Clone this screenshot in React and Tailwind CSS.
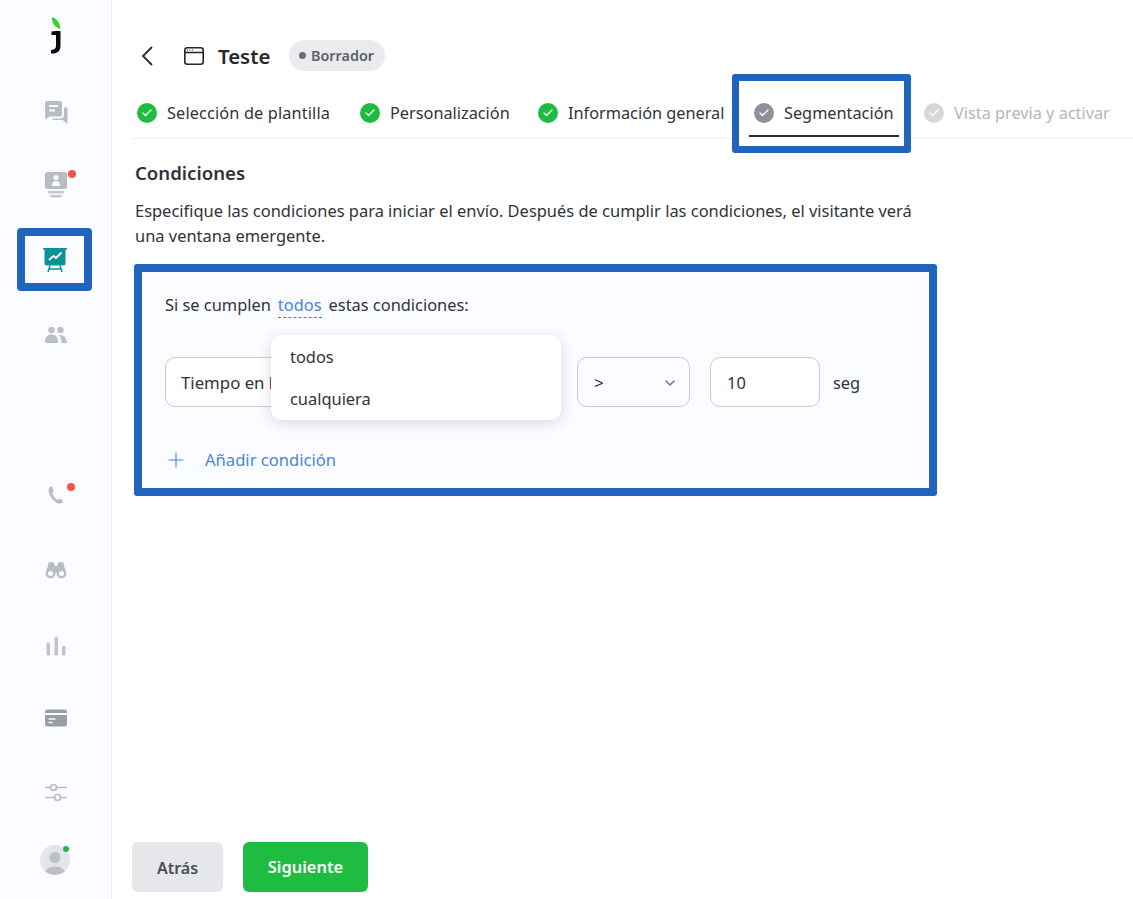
import { ChevronDown, Plus, Check } from 'lucide-react';

function ChatIcon() {
  return (
    <svg width="28" height="28" viewBox="0 0 28 28" fill="none">
      <path d="M3 4.500A2.500 2.500 0 0 1 5.500 2h12A2.500 2.500 0 0 1 20 4.500V15a2.500 2.500 0 0 1-2.500 2.500H8L3.300 20.500 3 4.500Z" fill="#b9bcc3" />
      <path d="M7 7h9M7 11.500h6" stroke="#fbfcff" strokeWidth="2" />
      <path d="M22 8.500h2.500a1 1 0 0 1 1 1V25l-5-4H11l-1-1.500h8.500a3.500 3.500 0 0 0 3.500-3.500V8.500Z" fill="#b9bcc3" />
    </svg>
  );
}

function ScreenPersonIcon() {
  return (
    <svg width="24" height="28" viewBox="0 0 24 28" fill="none">
      <rect x="1" y="1" width="22" height="17" rx="2.500" fill="#b9bcc3" />
      <circle cx="12" cy="6.500" r="2.500" fill="#fbfcff" />
      <path d="M7.500 15c.5-3.500 2-5 4.500-5s4 1.500 4.500 5h-9Z" fill="#fbfcff" />
      <rect x="4" y="20" width="16" height="2.500" rx="1" fill="#c6c9cf" />
      <rect x="6" y="24" width="12" height="2.500" rx="1" fill="#c6c9cf" />
    </svg>
  );
}

function BoardIcon() {
  return (
    <svg width="26" height="26" viewBox="0 0 26 26" fill="none">
      <path d="M1 1h24v1.500h-1.500V16a2.500 2.500 0 0 1-2.500 2.500H5A2.500 2.500 0 0 1 2.500 16V2.500H1V1Z" fill="#0a9396" />
      <path d="M7.500 12.500l4-3.500 2.500 2 5-5" stroke="#ffffff" strokeWidth="1.800" strokeLinecap="round" strokeLinejoin="round" />
      <path d="M8 18.500 6 25M18 18.500l2 6.500M7 22h12" stroke="#0a9396" strokeWidth="1.500" />
    </svg>
  );
}

function PeopleIcon() {
  return (
    <svg width="24" height="18" viewBox="0 0 24 18" fill="none">
      <circle cx="7.500" cy="4" r="3.200" fill="#bdc0c6" />
      <circle cx="16.500" cy="4" r="3.200" fill="#bdc0c6" />
      <path d="M1 16c0-5 2.500-7.500 6.500-7.500S14 11 14 16c0 .6-.4 1-1 1H2c-.6 0-1-.4-1-1Z" fill="#bdc0c6" />
      <path d="M16 9c4 0 6.500 3 7 7.500.1.500-.3.500-.6.500H17.500c0-3.500-1-6-2.500-7.500l1-.5Z" fill="#bdc0c6" />
    </svg>
  );
}

function PhoneIcon() {
  return (
    <svg width="18" height="20" viewBox="0 0 18 20" fill="none">
      <path d="M4 1.500C2.500 2 1.200 3.500 1.700 6.500c.7 4 3 7.500 6.800 10.500 2.500 1.800 5.200 2 6.800.8.900-.8.800-1.800 0-2.500l-1.800-1.300c-.8-.5-1.500-.4-2.200.2l-.9.8C8.200 13.500 6 10.500 5.200 8l.8-.8c.6-.6.7-1.300.4-2L5.600 2.500C5.300 1.700 4.700 1.300 4 1.500Z" fill="#b9bcc3" />
    </svg>
  );
}

function BinocularsIcon() {
  return (
    <svg width="22" height="18" viewBox="0 0 22 18" fill="none">
      <path d="M1 11 3.500 2.500C4 .5 8.500 .5 9.500 2.500V11H1Z" fill="#b9bcc3" />
      <path d="M21 11 18.500 2.500C18 .5 13.500 .5 12.500 2.500V11h8.500Z" fill="#b9bcc3" />
      <rect x="9" y="5" width="4" height="7" fill="#b9bcc3" />
      <circle cx="5.500" cy="12.500" r="3.700" fill="#fbfcff" stroke="#b9bcc3" strokeWidth="2.400" />
      <circle cx="16.500" cy="12.500" r="3.700" fill="#fbfcff" stroke="#b9bcc3" strokeWidth="2.400" />
    </svg>
  );
}

function BarsIcon() {
  return (
    <svg width="20" height="20" viewBox="0 0 20 20" fill="#c1c4ca">
      <rect x="0.500" y="6.500" width="3.500" height="13" rx="1.200" />
      <rect x="8.500" y="1" width="3.500" height="18.500" rx="1.200" />
      <rect x="16" y="10" width="3.500" height="9.500" rx="1.200" />
    </svg>
  );
}

function CardIcon() {
  return (
    <svg width="22" height="18" viewBox="0 0 22 18" fill="none">
      <rect y="0.500" width="22" height="17" rx="2.500" fill="#9a9da5" />
      <rect y="4" width="22" height="2" fill="#fbfcff" />
      <path d="M3.500 10h7M3.500 13.500h4" stroke="#fbfcff" strokeWidth="1.500" />
    </svg>
  );
}

function SlidersIcon() {
  return (
    <svg width="22" height="20" viewBox="0 0 22 20" fill="none" stroke="#b9bcc3" strokeWidth="1.700">
      <path d="M0 5.500h5.500M11.500 5.500H22M0 15.500h9.500M15.500 15.500H22" />
      <circle cx="8.500" cy="5.500" r="3" />
      <circle cx="12.500" cy="15.500" r="3" />
    </svg>
  );
}

function AvatarIcon() {
  return (
    <svg width="30" height="30" viewBox="0 0 30 30">
      <defs>
        <clipPath id="avatar-clip"><circle cx="15" cy="15" r="15" /></clipPath>
      </defs>
      <circle cx="15" cy="15" r="15" fill="#e4e5e8" />
      <g clipPath="url(#avatar-clip)" fill="#bcbfc4">
        <circle cx="15" cy="12.500" r="5.500" />
        <ellipse cx="15" cy="29" rx="11" ry="7.500" />
      </g>
    </svg>
  );
}

function NavItem({ children, dotClass, className }) {
  return (
    <div className={`flex items-center justify-center ${className}`}>
      <div className="relative flex items-center justify-center">
        {children}
        {dotClass && <span className={`absolute rounded-full ${dotClass}`} />}
      </div>
    </div>
  );
}

function Step({ label, width, color = 'bg-[#1ebd42]', text = 'text-[#30333a]', active }) {
  return (
    <div className="relative flex h-[50px] items-center gap-2.5 px-[5px]">
      {active && (
        <div className="absolute -bottom-[15px] -left-[17px] -right-[12px] -top-[14px] rounded-[3px] border-[7px] border-[#2064bd] bg-white" />
      )}
      <span className={`relative flex h-5 w-5 items-center justify-center rounded-full ${color}`}>
        <Check size={12} strokeWidth={2.5} className="text-white" />
      </span>
      <span className={`relative whitespace-nowrap text-[16.3px] ${width} ${text}`}>{label}</span>
      {active && <span className="absolute bottom-px left-0 right-0 h-0.5 bg-[#2b2d33]" />}
    </div>
  );
}

export default function App() {
  return (
    <div className="flex h-[899px] overflow-hidden bg-white font-['Noto_Sans',sans-serif] text-[#30333a]">
      <aside className="flex w-[112px] shrink-0 flex-col items-center border-r border-[#eceef2] bg-[#fbfcff]">
        <div className="mt-[17px] flex h-[36px] items-start justify-center">
          <svg width="12" height="37" viewBox="0 0 12 37" fill="none">
            <path d="M2 0c4 1.500 8 5 8.500 12C6 10.500 1.500 7 2 0Z" fill="#2fd423" />
            <path d="M6 14h4.500v15c0 4-2 6.500-6 7.500H1v-3.500c3.500-.5 5-1.500 5-4.500V18H1.500v-3.500L6 14Z" fill="#0b0b0b" />
          </svg>
        </div>
        <NavItem className="mt-[42px] h-[36px]"><ChatIcon /></NavItem>
        <NavItem className="mt-[36px] h-[36px]" dotClass="-right-[8px] -top-[1px] h-2 w-2 bg-[#f5514d]"><ScreenPersonIcon /></NavItem>
        <div className="mr-[2px] mt-[25px] flex h-[63px] w-[75px] items-center justify-center rounded-[4px] border-8 border-[#2064bd]">
          <BoardIcon />
        </div>
        <NavItem className="mt-[26px] h-[36px]"><PeopleIcon /></NavItem>
        <NavItem className="mt-[124px] h-[36px]" dotClass="-right-[10px] -top-[2px] h-2 w-2 bg-[#f5514d]"><PhoneIcon /></NavItem>
        <NavItem className="mt-[39px] h-[36px]"><BinocularsIcon /></NavItem>
        <NavItem className="mt-[40px] h-[36px]"><BarsIcon /></NavItem>
        <NavItem className="mt-[36px] h-[36px]"><CardIcon /></NavItem>
        <NavItem className="mt-[38px] h-[36px]"><SlidersIcon /></NavItem>
        <NavItem className="mr-[1px] mt-[32px] h-[36px]" dotClass="right-[1px] top-[1px] h-1.5 w-1.5 bg-[#1ebd42]"><AvatarIcon /></NavItem>
      </aside>

      <main className="flex min-w-0 flex-1 flex-col pl-5">
        <div className="flex h-[88px] items-start pt-10">
          <div className="flex h-[31px] items-center">
            <svg width="12" height="20" viewBox="0 0 12 20" fill="none" className="ml-[9px]">
              <path d="M11 1 2 10l9 9" stroke="#26282e" strokeWidth="1.800" />
            </svg>
            <svg width="20" height="18" viewBox="0 0 20 18" fill="none" className="ml-[31px]">
              <rect x="0.800" y="0.800" width="18.400" height="16.400" rx="2.500" stroke="#26282e" strokeWidth="1.600" />
              <path d="M1 5.500h18" stroke="#26282e" strokeWidth="1.600" />
              <path d="M3 3h1M5.500 3h1M8 3h1" stroke="#26282e" strokeWidth="1" />
            </svg>
            <h1 className="ml-[14px] w-[52px] whitespace-nowrap pt-px text-[20.4px] font-semibold text-[#26282e]">Teste</h1>
            <span className="ml-[19px] flex h-[31px] w-[96px] items-center gap-[5px] rounded-full bg-[#e9ebef] pl-2.5 text-[14.4px] font-semibold text-[#5c5f68]">
              <span className="h-[7px] w-[7px] rounded-full bg-[#6b6e77]" />
              Borrador
            </span>
          </div>
        </div>

        <div className="flex gap-5 border-b border-[#eceef2]">
          <Step label="Selección de plantilla" width="w-[163px] tracking-[0.14px]" />
          <Step label="Personalización" width="w-[118px]" />
          <Step label="Información general" width="w-[156px]" />
          <Step label="Segmentación" width="w-[110px]" color="bg-[#8e9199]" active />
          <Step label="Vista previa y activar" width="w-[158px]" color="bg-[#d5d7db]" text="text-[#b4b6bb]" />
        </div>

        <h2 className="ml-[3px] mt-[21px] text-[18.6px] font-semibold leading-[26px] text-[#30333a]">Condiciones</h2>
        <p className="ml-[3px] mt-[12px] w-[790px] text-[16.45px] leading-[25px]">
          Especifique las condiciones para iniciar el envío. Después de cumplir las condiciones, el visitante verá una ventana emergente.
        </p>

        <section className="ml-[2px] mt-4 h-[232px] w-[803px] rounded-[3px] border-8 border-[#2064bd] bg-[#fbfcff] pl-[23px] pt-[20px]">
          <div className="flex h-[26px] items-center text-[16.4px]">
            Si se cumplen
            <span className="mx-[7px] border-b border-dashed border-[#3f7ed8] leading-[24px] text-[#4a86dc]">todos</span>
            estas condiciones:
          </div>
          <div className="relative mt-[39px] flex items-center">
            <div className="flex h-[50px] w-[392px] items-center rounded-[10px] border border-[#c9cbd0] bg-white pb-px pl-[15px] pt-[2px] text-[16.8px]">Tiempo en la página</div>
            <div className="ml-5 flex h-[50px] w-[113px] items-center justify-between rounded-[10px] border border-[#c9cbd0] pl-[16px] pr-[11px] pt-[2px] text-[17px]">
              &gt;
              <ChevronDown size={16} strokeWidth={2.4} className="text-[#777a82]" />
            </div>
            <div className="ml-5 flex h-[50px] w-[110px] items-center rounded-[10px] border border-[#c9cbd0] bg-white pl-[16px] pt-[2px] text-[16.4px]">10</div>
            <span className="ml-[13px] pt-[2px] text-[16.4px]">seg</span>
            <div className="absolute -top-[22px] left-[106px] flex h-[85px] w-[290px] flex-col justify-center rounded-[10px] bg-white pl-[19px] pt-px text-[16.4px] shadow-[0_3px_14px_rgba(30,35,50,0.16)]">
              <div className="flex h-[43px] items-center">todos</div>
              <div className="flex h-[43px] items-center">cualquiera</div>
            </div>
          </div>
          <div className="mt-[41px] flex h-6 items-center text-[#4a86dc]">
            <Plus size={24} strokeWidth={1.2} className="-ml-[1px]" />
            <span className="ml-[17px] text-[16.6px]">Añadir condición</span>
          </div>
        </section>

        <div className="mb-[7px] mt-auto flex gap-5">
          <button className="h-[50px] w-[91px] rounded-[6px] bg-[#e5e7ea] pt-px text-base font-semibold text-[#4b4e56]">Atrás</button>
          <button className="h-[50px] w-[125px] rounded-[6px] bg-[#1ebd42] pt-px text-[16.4px] font-semibold text-white">Siguiente</button>
        </div>
      </main>
    </div>
  );
}
